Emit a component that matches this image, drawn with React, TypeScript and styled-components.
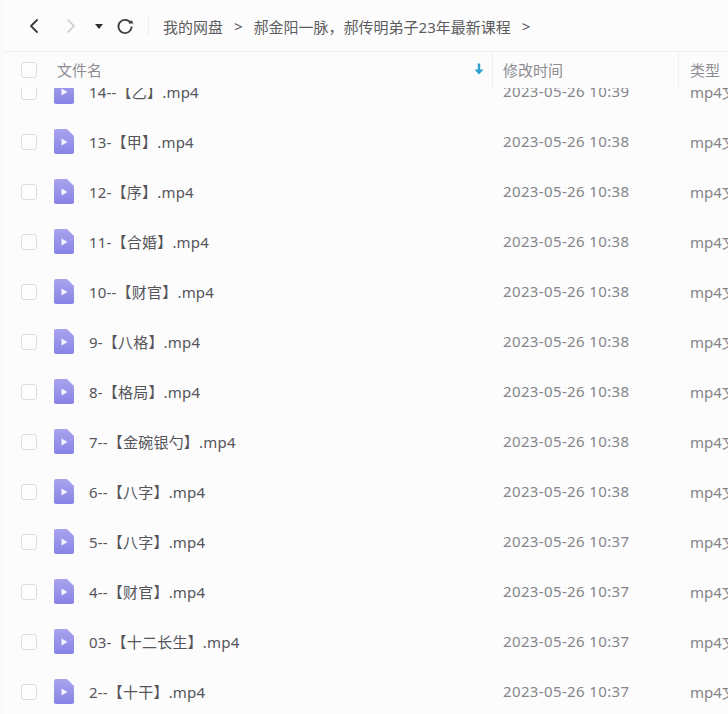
import styled, { createGlobalStyle } from 'styled-components';
import { ChevronLeft, ChevronRight } from 'lucide-react';

const files = [
	{ name: '14--【乙】.mp4', time: '10:39' },
	{ name: '13-【甲】.mp4', time: '10:38' },
	{ name: '12-【序】.mp4', time: '10:38' },
	{ name: '11-【合婚】.mp4', time: '10:38' },
	{ name: '10--【财官】.mp4', time: '10:38' },
	{ name: '9-【八格】.mp4', time: '10:38' },
	{ name: '8-【格局】.mp4', time: '10:38' },
	{ name: '7--【金碗银勺】.mp4', time: '10:38' },
	{ name: '6--【八字】.mp4', time: '10:38' },
	{ name: '5--【八字】.mp4', time: '10:37' },
	{ name: '4--【财官】.mp4', time: '10:37' },
	{ name: '03-【十二长生】.mp4', time: '10:37' },
	{ name: '2--【十干】.mp4', time: '10:37' },
];

const GlobalStyle = createGlobalStyle`
	html, body {
		margin: 0;
		padding: 0;
		background: #fcfcfd;
	}
	* {
		box-sizing: border-box;
	}
`;

const Page = styled.div`
	width: 728px;
	height: 714px;
	overflow: hidden;
	display: flex;
	flex-direction: column;
	background: #fcfcfd;
	border-left: 4px solid #fafafa;
	font-family: "Noto Sans", "Noto Sans CJK SC", sans-serif;
	font-size: 15px;
`;

const Toolbar = styled.div`
	height: 52px;
	flex-shrink: 0;
	display: flex;
	align-items: center;
	padding: 1px 0 0 18px;
	border-bottom: 1px solid #f1f1f3;
	color: #4a4a4d;
`;

const NavButton = styled.span<{ $width: number; $muted?: boolean }>`
	width: ${props => props.$width}px;
	display: flex;
	align-items: center;
	color: ${props => (props.$muted ? '#c9c9cc' : '#3c3c3f')};
`;

const Caret = styled.span`
	width: 0;
	height: 0;
	margin: 0 13px 0 1px;
	border-left: 4px solid transparent;
	border-right: 4px solid transparent;
	border-top: 5px solid #2f2f31;
`;

const ToolbarDivider = styled.span`
	width: 1px;
	height: 20px;
	margin: 0 14px 0 12px;
	background: #ededf0;
`;

const Crumb = styled.span`
	color: #5c5c60;
	white-space: nowrap;
`;

const CrumbArrow = styled.span`
	color: #55555a;
	margin: 0 11px 0 11px;
`;

const HeaderRow = styled.div`
	height: 36px;
	flex-shrink: 0;
	display: flex;
	align-items: stretch;
	position: relative;
	z-index: 1;
	background: #fcfcfd;
	color: #8d8d91;
`;

const HeaderCell = styled.div<{ $width: number; $divider?: boolean }>`
	width: ${props => props.$width}px;
	flex-shrink: 0;
	display: flex;
	align-items: center;
	padding: 0 0 2px 10px;
	border-right: ${props => (props.$divider ? '1px solid #f0f0f2' : 'none')};
`;

const NameHeader = styled(HeaderCell)`
	padding-left: 17px;
`;

const TypeHeader = styled(HeaderCell)`
	padding-left: 11px;
`;

const SortArrow = styled.svg`
	margin-left: auto;
	margin-right: 8px;
`;

const ListViewport = styled.div`
	flex: 1;
	overflow: hidden;
`;

const List = styled.div`
	margin-top: -21px;
`;

const Row = styled.div`
	height: 50px;
	display: flex;
	align-items: center;
	white-space: nowrap;
`;

const CheckCell = styled.div`
	width: 50px;
	flex-shrink: 0;
	padding-left: 17px;
	display: flex;
	align-items: center;
`;

const Checkbox = styled.span`
	width: 16px;
	height: 16px;
	border: 1px solid #dedee1;
	border-radius: 3px;
	background: #fdfdfd;
`;

const NameCell = styled.div`
	width: 438px;
	flex-shrink: 0;
	display: flex;
	align-items: center;
	gap: 15px;
	padding-bottom: 2px;
	color: #55555a;
	letter-spacing: 0.2px;
`;

const TimeCell = styled.div`
	width: 188px;
	flex-shrink: 0;
	padding: 0 0 2px 11px;
	color: #85858a;
	letter-spacing: 0.37px;
`;

const TypeCell = styled.div`
	padding: 0 0 2px 10px;
	color: #85858a;
`;

const HeaderCheck = styled(CheckCell)`
	width: 36px;
	padding-bottom: 1px;
`;

const RefreshIcon = () => (
	<svg width="18" height="18" viewBox="0 0 18 18">
		<path d="M14.6 6A6.6 6.6 0 1 0 15.6 9.5" fill="none" stroke="currentColor" strokeWidth="1.7" />
		<path d="M12.6 6.6H17.6L15.2 3Z" fill="currentColor" />
	</svg>
);

const FileIcon = () => (
	<svg width="20" height="25" viewBox="0 0 20 25" style={{ flexShrink: 0 }}>
		<defs>
			<linearGradient id="fileFill" x1="0" y1="0" x2="0" y2="1">
				<stop offset="0" stopColor="#a9a4ee" />
				<stop offset="1" stopColor="#8884e6" />
			</linearGradient>
		</defs>
		<path d="M2 0H13L20 7V23a2 2 0 0 1-2 2H2a2 2 0 0 1-2-2V2a2 2 0 0 1 2-2Z" fill="url(#fileFill)" />
		<path d="M7.5 9.5L13.5 13L7.5 16.5Z" fill="#f4f3fe" />
	</svg>
);

const App = () => {
	return (
		<Page>
			<GlobalStyle />
			<Toolbar>
				<NavButton $width={37}><ChevronLeft size={24} strokeWidth={1.8} /></NavButton>
				<NavButton $width={35} $muted><ChevronRight size={24} strokeWidth={1.6} /></NavButton>
				<Caret />
				<NavButton $width={20}><RefreshIcon /></NavButton>
				<ToolbarDivider />
				<Crumb>我的网盘</Crumb>
				<CrumbArrow>&gt;</CrumbArrow>
				<Crumb>郝金阳一脉，郝传明弟子23年最新课程</Crumb>
				<CrumbArrow>&gt;</CrumbArrow>
			</Toolbar>
			<HeaderRow>
				<HeaderCheck><Checkbox /></HeaderCheck>
				<NameHeader $width={453} $divider>
					文件名
					<SortArrow width="10" height="12" viewBox="0 0 10 12">
						<path d="M3.8 0.5H6.2V6.5H9.5L5 11.5L0.5 6.5H3.8Z" fill="#2f9fd0" />
					</SortArrow>
				</NameHeader>
				<HeaderCell $width={186} $divider>修改时间</HeaderCell>
				<TypeHeader $width={50}>类型</TypeHeader>
			</HeaderRow>
			<ListViewport>
				<List>
					{files.map(file => (
						<Row key={file.name}>
							<CheckCell><Checkbox /></CheckCell>
							<NameCell>
								<FileIcon />
								{file.name}
							</NameCell>
							<TimeCell>2023-05-26 {file.time}</TimeCell>
							<TypeCell>mp4文件</TypeCell>
						</Row>
					))}
				</List>
			</ListViewport>
		</Page>
	);
};

export default App;
